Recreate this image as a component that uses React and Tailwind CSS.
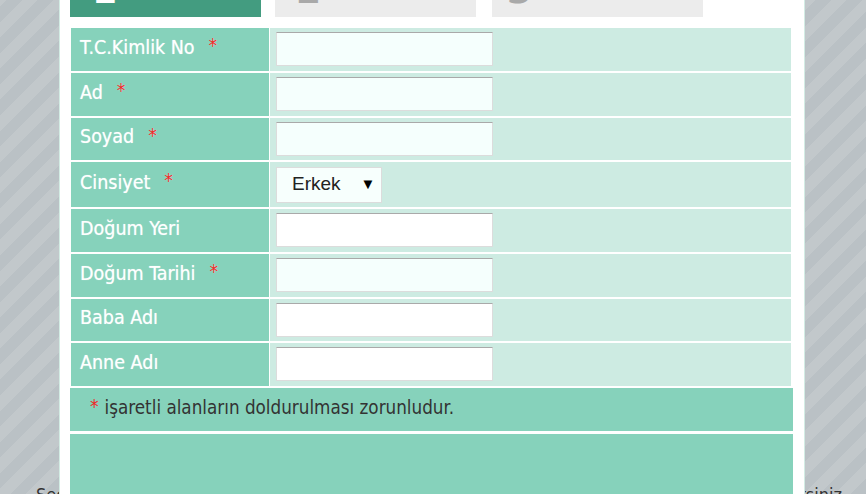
import React from "react";

const rows = [
  { label: "T.C.Kimlik No", req: true, type: "input", tint: true, h: "h-[43px]" },
  { label: "Ad", req: true, type: "input", tint: true, h: "h-[43px]" },
  { label: "Soyad", req: true, type: "input", tint: true, h: "h-[42px]" },
  { label: "Cinsiyet", req: true, type: "select", h: "h-[45px]" },
  { label: "Doğum Yeri", req: false, type: "input", tint: false, h: "h-[43px]" },
  { label: "Doğum Tarihi", req: true, type: "input", tint: true, h: "h-[43px]" },
  { label: "Baba Adı", req: false, type: "input", tint: false, h: "h-[42px]" },
  { label: "Anne Adı", req: false, type: "input", tint: false, h: "h-[43px]" },
];

export default function App() {
  return (
    <div
      className="relative h-[494px] w-[866px] overflow-hidden bg-[repeating-linear-gradient(-45deg,#bac1c5_0px,#bac1c5_11px,#c2c8cb_11px,#c2c8cb_22px)]"
      style={{ fontFamily: '"DejaVu Sans Condensed", "DejaVu Sans", sans-serif' }}
    >
      {/* page content behind the dialog */}
      <div className="absolute left-0 right-0 top-[484px] flex justify-between pl-[36px] pr-[24px] text-[18px] leading-[22px] text-[#333]">
        <span>Seçilen kişinin bilgilerini giriniz</span>
        <span>girebilirsiniz</span>
      </div>

      {/* dialog */}
      <div className="absolute left-[59px] top-[-23px] h-[560px] w-[746px] border-x border-[#d3ece4] bg-white pl-[10px]">
        {/* step tabs */}
        <div className="flex h-[40px] items-start">
          <div className="h-[40px] w-[191px] overflow-hidden bg-[#439c80] pl-[22px] text-[40px] font-bold leading-none text-white">
            <div className="mt-[-8px]">1</div>
          </div>
          <div className="ml-[14px] h-[40px] w-[201px] overflow-hidden bg-[#ececec] pl-[21px] text-[40px] font-bold leading-none text-[#a9a9a9]">
            <div className="mt-[-8px]">2</div>
          </div>
          <div className="ml-[16px] h-[40px] w-[211px] overflow-hidden bg-[#ececec] pl-[15px] text-[40px] font-bold leading-none text-[#a9a9a9]">
            <div className="mt-[-8px]">3</div>
          </div>
        </div>

        {/* form table */}
        <div className="ml-[1px] mt-[11px] grid w-[720px] grid-cols-[198px_1fr] gap-x-[1px] gap-y-[2px]">
          {rows.map((r) => (
            <React.Fragment key={r.label}>
              <div
                className={`${r.h} flex items-center bg-[#86d2bb] pb-[4px] pl-[9px] text-[19.5px] text-white [text-shadow:0_0_1px_rgba(255,255,255,0.6)]`}
              >
                <span>{r.label}</span>
                {r.req && (
                  <span className="ml-[14px] mt-[-4px] text-[19px] leading-none text-[#ee2a2a]">*</span>
                )}
              </div>
              <div className={`${r.h} flex items-center bg-[#cdebe2] pl-[6px]`}>
                {r.type === "input" ? (
                  <div
                    className={`h-[34px] w-[217px] border border-[#dcdcdc] border-t-[#a9a9a9] ${
                      r.tint ? "bg-[#f5fffd]" : "bg-white"
                    } mb-[1px]`}
                  />
                ) : (
                  <div
                    className="flex h-[36px] w-[106px] items-center border border-[#dcdcdc] bg-[#f7fffd] pl-[15px] text-[19px] text-[#222]"
                    style={{ fontFamily: '"Liberation Sans", Arial, sans-serif' }}
                  >
                    <span>Erkek</span>
                    <span className="ml-[20px] text-[15px] text-black">▼</span>
                  </div>
                )}
              </div>
            </React.Fragment>
          ))}
        </div>

        {/* footer note */}
        <div className="mt-[2px] flex h-[43px] w-[723px] items-center bg-[#86d2bb] pb-[2px] pl-[20px] text-[18.7px] text-[#333]">
          <span className="mr-[6px] mt-[-4px] text-[19px] leading-none text-[#ee2a2a]">*</span>
          <span>işaretli alanların doldurulması zorunludur.</span>
        </div>
        <div className="mt-[3px] h-[120px] w-[723px] bg-[#86d2bb]" />
      </div>
    </div>
  );
}
